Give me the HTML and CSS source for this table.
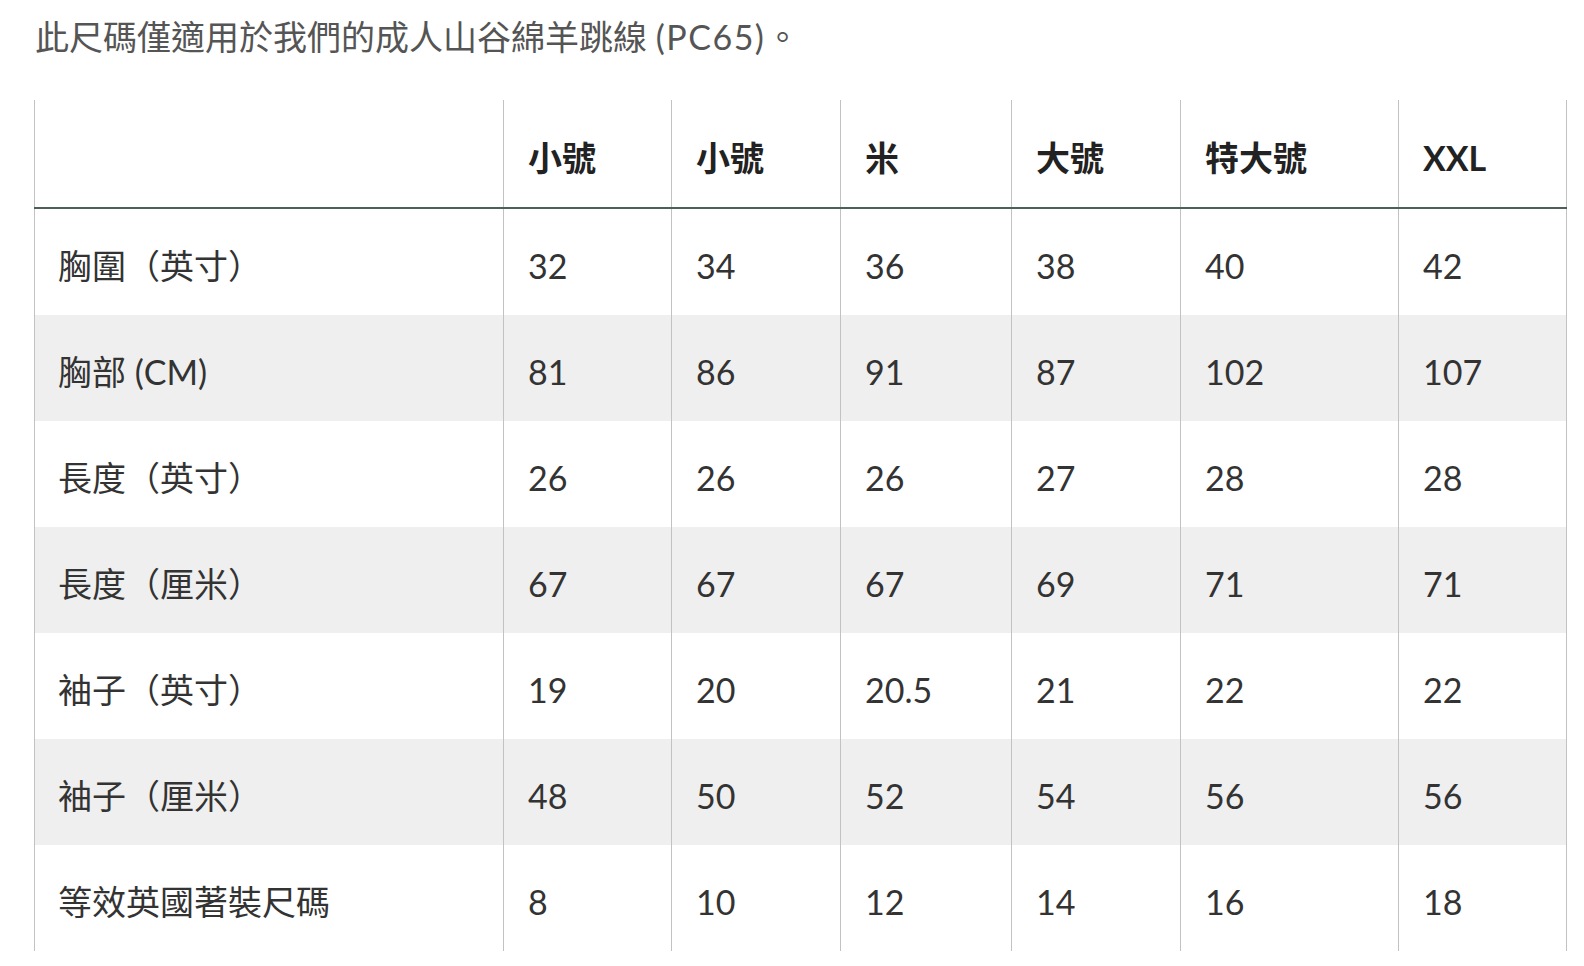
FILE: index.html
```html
<!DOCTYPE html>
<html lang="zh-Hant">
<head>
<meta charset="utf-8">
<title>尺碼表</title>
<link rel="stylesheet" href="styles.css">
</head>
<body>
<p class="intro">此尺碼僅適用於我們的成人山谷綿羊跳線 <span class="code">(PC65)</span>。</p>
<table class="size-table">
  <colgroup>
    <col class="c-label">
    <col class="c-s">
    <col class="c-s2">
    <col class="c-m">
    <col class="c-l">
    <col class="c-xl">
    <col class="c-xxl">
  </colgroup>
  <thead>
    <tr>
      <th></th>
      <th>小號</th>
      <th>小號</th>
      <th>米</th>
      <th>大號</th>
      <th>特大號</th>
      <th>XXL</th>
    </tr>
  </thead>
  <tbody>
    <tr><td>胸圍（英寸）</td><td>32</td><td>34</td><td>36</td><td>38</td><td>40</td><td>42</td></tr>
    <tr class="alt"><td>胸部 (CM)</td><td>81</td><td>86</td><td>91</td><td>87</td><td>102</td><td>107</td></tr>
    <tr><td>長度（英寸）</td><td>26</td><td>26</td><td>26</td><td>27</td><td>28</td><td>28</td></tr>
    <tr class="alt"><td>長度（厘米）</td><td>67</td><td>67</td><td>67</td><td>69</td><td>71</td><td>71</td></tr>
    <tr><td>袖子（英寸）</td><td>19</td><td>20</td><td>20.5</td><td>21</td><td>22</td><td>22</td></tr>
    <tr class="alt"><td>袖子（厘米）</td><td>48</td><td>50</td><td>52</td><td>54</td><td>56</td><td>56</td></tr>
    <tr><td>等效英國著裝尺碼</td><td>8</td><td>10</td><td>12</td><td>14</td><td>16</td><td>18</td></tr>
  </tbody>
</table>
</body>
</html>
```

FILE: styles.css
```css
html, body {
  margin: 0;
  padding: 0;
  background: #ffffff;
}

body {
  font-family: Lato, "Noto Sans CJK TC", "Noto Sans", sans-serif;
  color: #333333;
}

.intro {
  margin: 0;
  padding: 17px 0 0 35px;
  height: 100px;
  box-sizing: border-box;
  font-size: 34px;
  line-height: 40px;
  color: #555555;
}

.intro .code {
  letter-spacing: 1.5px;
}

.size-table {
  margin-left: 34px;
  width: 1532px;
  border-collapse: collapse;
  table-layout: fixed;
  font-size: 34px;
}

.c-label { width: 469px; }
.c-s { width: 168px; }
.c-s2 { width: 169px; }
.c-m { width: 171px; }
.c-l { width: 169px; }
.c-xl { width: 218px; }
.c-xxl { width: 168px; }

.size-table th,
.size-table td {
  border-left: 1px solid #c2c2c2;
  border-right: 1px solid #c2c2c2;
  text-align: left;
  vertical-align: middle;
  line-height: 40px;
  padding: 37px 0 29px 24px;
  white-space: nowrap;
}

.size-table td:first-child {
  padding-left: 23px;
}

.size-table th {
  font-weight: 700;
  color: #222222;
  padding-top: 38px;
  padding-bottom: 29px;
  border-bottom: 2px solid #4f5e57;
}

.size-table tr.alt td {
  background: #efefef;
}
```
